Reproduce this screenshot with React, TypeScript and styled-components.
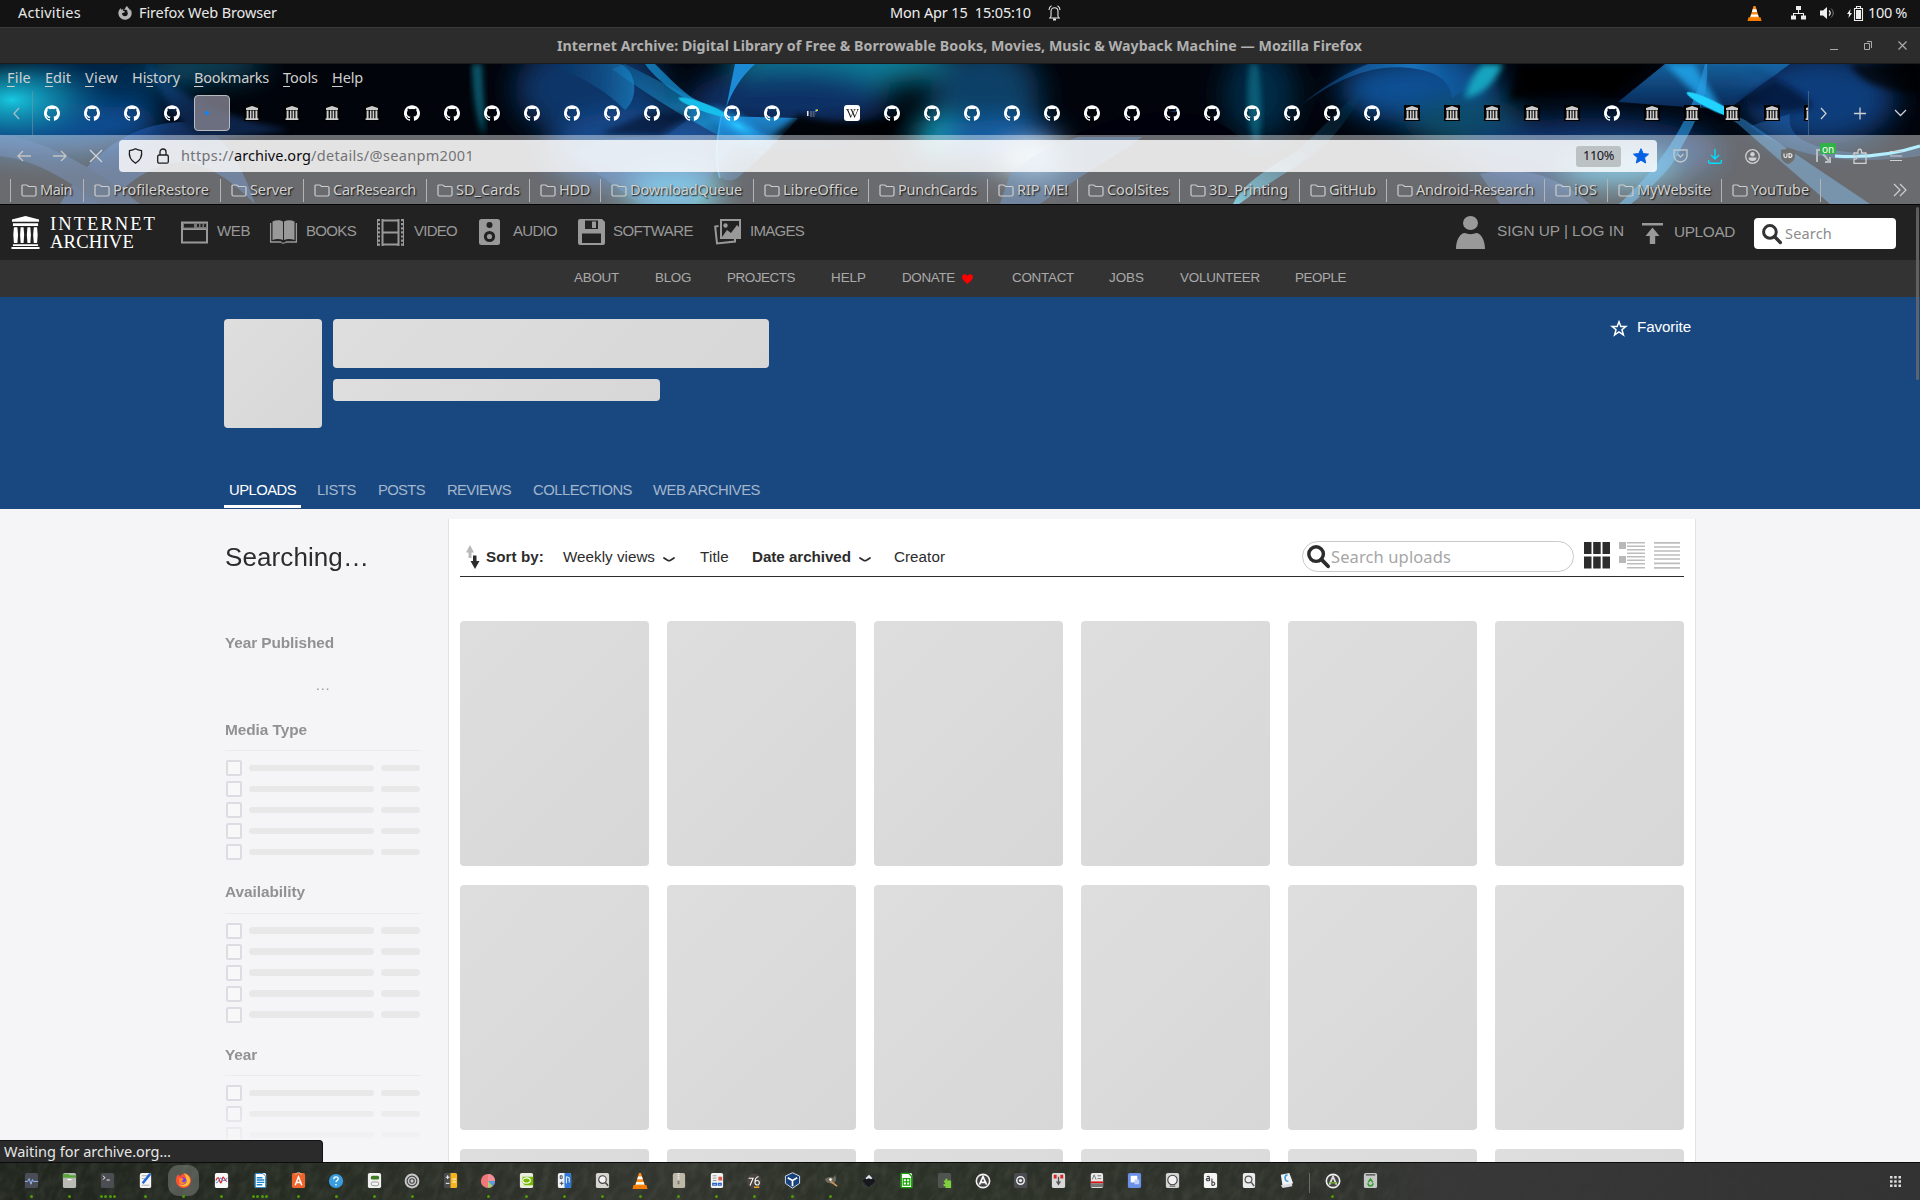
import React, { useLayoutEffect, useRef, useState } from 'react';
import styled, { createGlobalStyle } from 'styled-components';
import { SiGithub } from 'react-icons/si';
import { FaWikipediaW, FaFirefoxBrowser } from 'react-icons/fa';

const UI = '"Noto Sans", "Open Sans", sans-serif';
const SANS = '"Liberation Sans", Arial, sans-serif';
const SERIF = '"Liberation Serif", "Times New Roman", serif';

const GlobalStyle = createGlobalStyle`
  *, *::before, *::after { box-sizing: border-box; }
  body { margin: 0; background: #000; font-family: ${UI}; }
`;

/* ---------- text that keeps a given advance width ---------- */

const Label = styled.span<{ $size: number; $color: string; $font: string; $bold?: boolean; $ml: number; $shadow?: boolean }>`
  display: inline-block;
  flex: none;
  white-space: pre;
  line-height: 1.2;
  margin-left: ${(p) => p.$ml}px;
  font-family: ${(p) => p.$font};
  font-size: ${(p) => p.$size}px;
  font-weight: ${(p) => (p.$bold ? 700 : 400)};
  color: ${(p) => p.$color};
  text-shadow: ${(p) => (p.$shadow ? '1px 1px 1.5px rgba(0,0,0,0.9)' : 'none')};
  u { text-underline-offset: 3px; text-decoration-thickness: 1px; }
`;

type FitProps = {
  children: React.ReactNode;
  chars?: number;
  w: number;
  size?: number;
  color?: string;
  font?: string;
  bold?: boolean;
  ml?: number;
  shadow?: boolean;
};

function Fit({ children, chars, w, size = 14.5, color = '#fff', font = UI, bold, ml = 0, shadow }: FitProps) {
  const ref = useRef<HTMLSpanElement>(null);
  const [spacing, setSpacing] = useState(0);
  const count = chars ?? String(children).length;
  useLayoutEffect(() => {
    if (ref.current) setSpacing((w - ref.current.getBoundingClientRect().width) / count);
  }, [w, count]);
  return (
    <Label ref={ref} $size={size} $color={color} $font={font} $bold={bold} $ml={ml} $shadow={shadow} style={{ letterSpacing: spacing }}>
      {children}
    </Label>
  );
}

/* ---------- shell ---------- */

const Desktop = styled.div`
  position: relative;
  width: 1920px;
  height: 1200px;
  display: flex;
  flex-direction: column;
  overflow: hidden;
  background: #f5f5f7;
`;

const TopBar = styled.div`
  height: 27px;
  flex: none;
  display: grid;
  grid-template-columns: 890px 1fr 173px;
  align-items: center;
  padding-bottom: 1px;
  background: #131313;
`;

const Row = styled.div<{ $pl?: number; $gap?: number }>`
  display: flex;
  align-items: center;
  height: 100%;
  padding-left: ${(p) => p.$pl ?? 0}px;
  gap: ${(p) => p.$gap ?? 0}px;
`;

const Icon = styled.svg<{ $ml?: number; $mt?: number }>`
  display: block;
  flex: none;
  margin-left: ${(p) => p.$ml ?? 0}px;
  margin-top: ${(p) => p.$mt ?? 0}px;
  overflow: visible;
`;

const TitleBar = styled.div`
  height: 37px;
  flex: none;
  display: grid;
  grid-template-columns: 557px 1fr 90px;
  align-items: center;
  background: #2c2c2c;
  border-top: 1px solid #3b3b3b;
  border-bottom: 1px solid #1b1b1b;
`;

/* ---------- browser chrome ---------- */

const Chrome = styled.div`
  position: relative;
  height: 141px;
  flex: none;
  display: flex;
  flex-direction: column;
  border-bottom: 1px solid #060606;
  isolation: isolate;
`;

const Artwork = styled.svg`
  position: absolute;
  inset: 0;
  z-index: -1;
`;

const MenuRow = styled.div`
  height: 27px;
  padding: 1px 0 0 7px;
  display: flex;
  align-items: center;
`;

const TabRow = styled.div`
  height: 44px;
  display: flex;
  align-items: stretch;
`;

const Scroller = styled.div<{ $side: 'left' | 'right' }>`
  width: ${(p) => (p.$side === 'left' ? 33 : 36)}px;
  display: flex;
  align-items: center;
  justify-content: center;
  ${(p) => (p.$side === 'left' ? 'border-right: 1px solid rgba(140,150,160,0.5);' : 'border-left: 1px solid rgba(120,140,150,0.5); padding-right: 6px;')}
`;

const Tabs = styled.div`
  width: 1775px;
  display: flex;
  overflow: hidden;
`;

const Tab = styled.div`
  width: 40px;
  flex: none;
  display: flex;
  align-items: center;
  justify-content: center;
  padding: 0 2px 0 0;
  color: #fff;
`;

const ActiveTab = styled.div`
  width: 36px;
  height: 36px;
  flex: none;
  margin: 4px 3px 4px 1px;
  display: flex;
  align-items: center;
  padding-left: 10px;
  border: 1px solid #b9b9c0;
  border-radius: 4px;
  background: rgba(125, 125, 138, 0.85);
`;

const LoadingDot = styled.div`
  width: 4px;
  height: 4px;
  border-radius: 2px;
  background: #0a84ff;
`;

const Overlay = styled.div`
  flex: 1;
  background: rgba(255, 255, 255, 0.41);
  display: flex;
  flex-direction: column;
`;

const NavRow = styled.div`
  height: 41px;
  flex: none;
  display: flex;
  align-items: center;
  padding-top: 1px;
`;

const UrlBar = styled.div`
  height: 32px;
  flex: 0 0 1538px;
  margin-left: 17px;
  padding: 0 8px 0 9px;
  display: flex;
  align-items: center;
  border-radius: 4px;
  background: rgba(255, 255, 255, 0.81);
`;

const Zoom = styled.div`
  width: 45px;
  height: 25px;
  flex: none;
  margin-left: auto;
  margin-right: 12px;
  height: 21px;
  display: flex;
  align-items: center;
  justify-content: center;
  border-radius: 3px;
  background: #bcc1c4;
`;

const Spacer = styled.div<{ $w: number }>`
  width: ${(p) => p.$w}px;
  flex: none;
`;

const Bookmarks = styled.div`
  height: 28px;
  display: flex;
  align-items: center;
  padding-left: 10px;
`;

const Bookmark = styled.div<{ $w: number }>`
  width: ${(p) => p.$w}px;
  height: 23px;
  flex: none;
  display: flex;
  align-items: center;
  padding-left: 9.5px;
  gap: 3.5px;
  border-left: 1px solid #b4b4b4;
`;

const Badge = styled.div`
  position: absolute;
  left: 5px;
  top: -5px;
  width: 16px;
  height: 11px;
  display: flex;
  align-items: center;
  justify-content: center;
  border-radius: 2px;
  background: #2fb344;
`;

const BadgeHost = styled.div`
  position: relative;
  display: flex;
  width: 18px;
  margin-left: 20px;
`;

/* ---------- page ---------- */

const SiteNav = styled.div`
  height: 55px;
  flex: none;
  display: flex;
  align-items: center;
  padding-left: 11px;
  background: #222;
`;

const Wordmark = styled.div`
  width: 121px;
  margin-left: 10px;
  padding-top: 1px;
  display: flex;
  flex-direction: column;
`;

const WordLine = styled.div`
  height: 18.5px;
  display: flex;
  align-items: center;
`;

const NavSlot = styled.div<{ $w: number; $tl: number }>`
  width: ${(p) => p.$w}px;
  flex: none;
  display: grid;
  grid-template-columns: ${(p) => p.$tl}px 1fr;
  align-items: center;
  justify-items: start;
  padding-bottom: 1px;
`;

const Lift = styled.div`
  display: flex;
  padding-bottom: 2px;
`;

const SiteSearch = styled.div`
  width: 142px;
  height: 31px;
  margin-top: 2px;
  display: flex;
  align-items: center;
  padding-left: 8px;
  border-radius: 4px;
  background: #fff;
`;

const SubNav = styled.div`
  height: 37px;
  flex: none;
  display: flex;
  align-items: center;
  padding: 0 0 1px 574px;
  background: #333;
`;

const Hero = styled.div`
  height: 212px;
  flex: none;
  display: flex;
  flex-direction: column;
  padding: 22px 224px 0;
  background: #194880;
`;

const HeroTop = styled.div`
  height: 150px;
  flex: none;
  display: flex;
  gap: 11px;
`;

const Placeholder = styled.div<{ $w: number; $h: number }>`
  width: ${(p) => p.$w}px;
  height: ${(p) => p.$h}px;
  border-radius: 4px;
  background: linear-gradient(135deg, #dedede, #d7d7d7);
`;

const Stack = styled.div<{ $gap: number }>`
  display: flex;
  flex-direction: column;
  gap: ${(p) => p.$gap}px;
`;

const Favorite = styled.div`
  height: 16px;
  margin: 0 5px 0 auto;
  display: flex;
  align-items: center;
  gap: 9px;
`;

const HeroTabs = styled.div`
  height: 40px;
  display: flex;
  gap: 11px;
`;

const HeroTab = styled.div<{ $w: number; $active?: boolean }>`
  width: ${(p) => p.$w}px;
  height: 39px;
  padding: 9px 0 0 5px;
  border-bottom: 3px solid ${(p) => (p.$active ? '#fff' : 'transparent')};
`;

const Body = styled.div`
  height: 653px;
  flex: none;
  display: flex;
  padding: 10px 0 0 225px;
  overflow: hidden;
  background: #f5f5f7;
`;

const Sidebar = styled.div`
  width: 223px;
  height: 643px;
  flex: none;
  padding-top: 23px;
  overflow: hidden;
  display: flex;
  flex-direction: column;
  mask-image: linear-gradient(#000 582px, transparent 628px);
`;

const Slot = styled.div<{ $h: number; $pl?: number }>`
  height: ${(p) => p.$h}px;
  padding-left: ${(p) => p.$pl ?? 0}px;
  flex: none;
`;

const Facet = styled.div`
  width: 196px;
  height: 162.6px;
  flex: none;
  display: flex;
  flex-direction: column;
`;

const FacetHead = styled.div`
  height: 34px;
  flex: none;
  padding-top: 0.7px;
  margin-bottom: 6.5px;
  border-bottom: 1px solid #ebebed;
`;

const FacetRow = styled.div`
  height: 21px;
  flex: none;
  display: flex;
  align-items: center;
  padding-left: 1px;
`;

const Check = styled.div`
  width: 16px;
  height: 16px;
  flex: none;
  margin-right: 7px;
  border: 2px solid #dcdce2;
  border-radius: 2px;
  background: #f8f8f9;
`;

const Bar = styled.div<{ $w: number }>`
  width: ${(p) => p.$w}px;
  height: 6.6px;
  flex: none;
  margin-right: 7px;
  border-radius: 4px;
  background: #e8e8e8;
`;

const Panel = styled.div`
  width: 1248px;
  height: 643px;
  padding: 19px 11px 0 11px;
  border: 1px solid #e3e3e5;
  border-width: 0 1px;
  background: #fff;
`;

const SortBar = styled.div`
  height: 39px;
  display: flex;
  align-items: center;
  padding: 1px 4px 1px 5px;
  border-bottom: 1px solid #2c2c2c;
`;

const UploadSearch = styled.div`
  width: 272px;
  height: 31px;
  margin: -1px 0 0 auto;
  display: flex;
  align-items: center;
  padding-left: 4px;
  border: 1px solid #c9c9c9;
  border-radius: 16px;
`;

const Tiles = styled.div`
  margin-top: 44px;
  display: grid;
  grid-template-columns: repeat(6, 1fr);
  gap: 19px 18.5px;
`;

const Tile = styled.div`
  height: 245px;
  border-radius: 4px;
  background: linear-gradient(135deg, #dedede, #d7d7d7);
`;

const Status = styled.div`
  position: absolute;
  left: 0;
  top: 1140px;
  width: 323px;
  height: 22px;
  display: flex;
  padding: 1.500px 0 0 4px;
  border: 1px solid #121212;
  border-width: 1px 1px 0 0;
  border-radius: 0 4px 0 0;
  background: #2b2b2b;
`;

const ScrollThumb = styled.div`
  position: absolute;
  left: 1916px;
  top: 207px;
  width: 3px;
  height: 173px;
  border-radius: 2px;
  background: #686868;
  opacity: 0.85;
`;

const Dock = styled.div`
  position: relative;
  height: 38px;
  flex: none;
  display: flex;
  padding-left: 12.8px;
  border-top: 1px solid #0b0b0b;
  background: #2b3026;
  isolation: isolate;
`;

const DockItem = styled.div`
  width: 38.04px;
  flex: none;
  display: flex;
  flex-direction: column;
  align-items: center;
  padding-top: 2px;
`;

const DockTile = styled.div<{ $on?: boolean }>`
  width: 31px;
  height: 31px;
  flex: none;
  display: flex;
  align-items: center;
  justify-content: center;
  border-radius: 11px;
  background: ${(p) => (p.$on ? 'rgba(150,155,148,0.42)' : 'transparent')};
`;

const Dots = styled.div`
  margin-top: -2px;
  height: 4px;
  display: flex;
  align-items: center;
  gap: 1.4px;
`;

const Dot = styled.i`
  width: 3px;
  height: 3px;
  border-radius: 1.5px;
  background: #4e9a06;
`;

const DockRule = styled.div`
  width: 1px;
  height: 20px;
  margin: 10px 4px 0 3px;
  background: #6b6b6b;
`;

/* ---------- drawings ---------- */

const Temple = ({ w, h, color }: { w: number; h: number; color: string }) => (
  <Icon width={w} height={h} viewBox="0 0 30 34" preserveAspectRatio="none" fill={color}>
    <path d="M15 0 29 3.5V6H1V3.5ZM2 7.5h26v2.8H2ZM2 29h26v2H2ZM.5 32h29v2H.5Z" />
    <path d="M3 11.5h3.6l.7 8-.7 8.3H3l-.6-8.3ZM10 11.5h3l.6 8-.6 8.3h-3l-.6-8.3ZM17 11.5h3l.6 8-.6 8.3h-3l-.6-8.3ZM23.6 11.5H27l.6 8-.6 8.3h-3.4l-.7-8.3Z" />
  </Icon>
);

const ArchiveFavicon = () => (
  <Icon width="16" height="16" viewBox="0 0 16 16">
    <path fill="#000" d="M0 0h16v16H0z" />
    <path fill="#ccc" d="M8 1 14 3v2H2V3ZM2.6 5.4h2v7.8h-2zM5.9 5.4h1.6v7.8H5.9zM8.6 5.4h1.6v7.8H8.6zM11.4 5.4h2v7.8h-2zM1.6 13.2h12.8V15H1.6z" />
  </Icon>
);

const Wiki = styled.div`
  width: 16px;
  height: 16px;
  display: flex;
  align-items: center;
  justify-content: center;
  border-radius: 3px;
  background: #fff;
  color: #111;
`;

const Folder = () => (
  <Icon width="16" height="13" viewBox="0 0 16 13" fill="none" stroke="#cdcdcd" strokeWidth="1.2">
    <path d="M1 2a1 1 0 0 1 1-1h3.6a1 1 0 0 1 .7.3l1.2 1.2h6.3a1.2 1.2 0 0 1 1.2 1.2v6.8a1.5 1.5 0 0 1-1.5 1.5h-11A1.5 1.5 0 0 1 1 10.500Z" />
  </Icon>
);

const Magnifier = ({ size, color = '#333' }: { size: number; color?: string }) => (
  <Icon width={size} height={size} viewBox="0 0 24 24" fill="none" stroke={color}>
    <circle cx="9.500" cy="9.500" r="7.600" strokeWidth="3.600" />
    <path d="m15 15 7 7.200" strokeWidth="4" strokeLinecap="round" />
  </Icon>
);

const Chevron = () => (
  <Icon width="12" height="5" viewBox="0 0 12 5" $ml={8} $mt={5} fill="none" stroke="#2c2c2c" strokeWidth="1.8" strokeLinecap="round">
    <path d="M1 1 4.500 3.200Q6 4 7.500 3.200L11 1" />
  </Icon>
);

const ThemeArt = () => (
  <Artwork width="1920" height="140" viewBox="0 0 1920 140">
    <defs>
      <filter id="s3" x="-20%" y="-40%" width="140%" height="180%"><feGaussianBlur stdDeviation="3" /></filter>
      <filter id="s1" x="-20%" y="-20%" width="140%" height="140%"><feGaussianBlur stdDeviation=".7" /></filter>
      <filter id="s12" x="-60%" y="-100%" width="220%" height="300%"><feGaussianBlur stdDeviation="14" /></filter>
      <linearGradient id="down" x1="0" y1="0" x2="0" y2="1"><stop offset="0" stopColor="#1a70b4" /><stop offset="1" stopColor="#0a2f64" /></linearGradient>
      <linearGradient id="beam" x1="0" y1="0" x2="1" y2="1"><stop offset="0" stopColor="#1488cc" stopOpacity=".5" /><stop offset=".6" stopColor="#20b8f8" /><stop offset="1" stopColor="#1a6fd0" stopOpacity=".1" /></linearGradient>
      <linearGradient id="tail" x1="0" y1="0" x2="0" y2="1"><stop offset="0" stopColor="#22a8f4" stopOpacity=".85" /><stop offset="1" stopColor="#2a78cc" stopOpacity=".3" /></linearGradient>
      <linearGradient id="lobe" x1="0" x2="1"><stop offset="0" stopColor="#0c3a70" stopOpacity="0" /><stop offset="1" stopColor="#1a7ab8" /></linearGradient>
      <linearGradient id="lance" x1="1" y1="0" x2="0" y2="1"><stop offset="0" stopColor="#0e5a74" stopOpacity=".1" /><stop offset=".5" stopColor="#1a6f9c" stopOpacity=".45" /><stop offset="1" stopColor="#3ed0f0" /></linearGradient>
      <linearGradient id="arc"><stop offset="0" stopColor="#12509a" stopOpacity=".5" /><stop offset=".6" stopColor="#1b80cc" /><stop offset="1" stopColor="#0c4a8c" stopOpacity=".4" /></linearGradient>
      <radialGradient id="hot"><stop offset="0" stopColor="#28c4ff" /><stop offset="1" stopColor="#1678d8" stopOpacity="0" /></radialGradient>
      <radialGradient id="teal"><stop offset="0" stopColor="#18c8e0" /><stop offset=".5" stopColor="#0f84a4" stopOpacity=".7" /><stop offset="1" stopColor="#0a4a80" stopOpacity="0" /></radialGradient>
    </defs>
    <path fill="#01040b" d="M0 0h1920v140H0z" />
    <g filter="url(#s12)">
      <ellipse cx="50" cy="60" rx="110" ry="30" fill="#0c4f96" />
      <ellipse cx="110" cy="15" rx="90" ry="28" fill="#062c50" />
      <ellipse cx="205" cy="0" rx="60" ry="16" fill="#0a4a62" />
      <ellipse cx="590" cy="25" rx="75" ry="50" fill="#0b3568" />
      <ellipse cx="640" cy="85" rx="90" ry="40" fill="#15488c" />
      <ellipse cx="840" cy="-4" rx="110" ry="26" fill="#11809c" />
      <ellipse cx="790" cy="35" rx="100" ry="32" fill="#0c3068" />
      <ellipse cx="985" cy="30" rx="55" ry="50" fill="#074066" />
      <ellipse cx="938" cy="74" rx="24" ry="18" fill="#18b0d0" />
      <ellipse cx="1000" cy="78" rx="60" ry="22" fill="#1664ac" />
      <ellipse cx="1035" cy="100" rx="30" ry="12" fill="#bff0ff" />
      <ellipse cx="1260" cy="30" rx="36" ry="46" fill="#062a46" />
      <ellipse cx="1420" cy="25" rx="80" ry="34" fill="#0e4f94" />
      <ellipse cx="1465" cy="58" rx="60" ry="26" fill="#0b4c68" />
      <ellipse cx="1590" cy="88" rx="130" ry="34" fill="#0c3570" />
      <ellipse cx="1620" cy="108" rx="54" ry="12" fill="#3cb4e0" />
      <ellipse cx="1820" cy="35" rx="75" ry="46" fill="#0d3c7c" />
      <ellipse cx="675" cy="130" rx="46" ry="18" fill="#34ccee" />
    </g>
    <ellipse cx="12" cy="36" rx="105" ry="50" fill="url(#teal)" />
    <g opacity=".42">
      <path filter="url(#s1)" fill="#2a6ad0" d="M60 140C90 90 130 58 185 58c30 0 55 35 70 82-25-25-45-38-70-42-25 0-55 15-75 42Z" />
      <path filter="url(#s1)" fill="#2a5ca8" d="M0 70c40 5 90 30 140 70h-40C60 110 30 95 0 92Z" />
      <path filter="url(#s3)" fill="#1b4f9c" d="M150 0c30 34 70 52 140 66L200 78C180 60 165 34 145 0Z" />
    </g>
    <path filter="url(#s3)" d="M472 0c1 30 4 55 12 72 2-25-2-50-2-72Z" fill="#0e6f88" opacity=".8" />
    <path filter="url(#s1)" d="M545 0c45 14 68 34 80 46 14-12 12-38-4-46Z" fill="url(#lobe)" opacity=".8" />
    <path filter="url(#s1)" d="M625 0 705 40 780 78 762 92C720 75 660 40 612 5Z" fill="url(#beam)" opacity=".6" />
    <path filter="url(#s1)" d="M655 0c18 18 32 32 52 44l-4 0C678 32 655 15 645 0Z" fill="#1686c6" opacity=".8" />
    <path d="M735 0h20C740 14 732 28 726 44Z" fill="#1a8ad4" filter="url(#s1)" />
    <path d="M690 54 668 70 600 76 570 90 640 140h50l45-60Z" fill="#2a66b8" opacity=".35" filter="url(#s1)" />
    <path d="M692 50 660 72 600 70 650 48Z" fill="#00040c" opacity=".5" filter="url(#s3)" />
    <path d="M700 42 718 52 798 54C780 75 758 96 742 110c-8 10-22 8-24-4-3-18-1-36 5-54Z" fill="url(#tail)" filter="url(#s1)" />
    <ellipse cx="738" cy="62" rx="42" ry="15" transform="rotate(30 738 62)" fill="url(#hot)" />
    <ellipse cx="703" cy="43" rx="26" ry="4" transform="rotate(20 703 43)" fill="#19c6f0" opacity=".9" filter="url(#s1)" />
    <path d="M722 50c-7 30-7 50-2 64" stroke="#38b6ff" strokeWidth="1.500" fill="none" opacity=".7" />
    <path d="M800 50c20 8 60 14 105 0l-15 24H770Z" fill="#000" opacity=".85" filter="url(#s3)" />
    <path d="M1010 110c40-35 80-40 170-65-50 40-90 60-140 95h-40Z" fill="#1c5ca8" opacity=".5" filter="url(#s1)" />
    <path d="M1085 66c50-20 110-30 155 7H1070Z" fill="#03060f" filter="url(#s1)" />
    <path d="M1250 0c-4 30-3 60 6 82 8-18 6-50 2-82Z" fill="#0d6a84" opacity=".8" filter="url(#s3)" />
    <path d="M1300 42c40-30 76-42 110-38 26 3 40 12 42 30 14-8 30-20 34-34h-118c-25 10-50 26-68 42Z" fill="url(#arc)" opacity=".8" filter="url(#s1)" />
    <path d="M1483 0h20c-8 18-18 30-38 34 2-12 8-24 18-34Z" fill="#18a4c0" filter="url(#s3)" />
    <path d="M1233 140c10-22 40-38 62-52 22-16 40-42 72-66-20 36-35 56-62 74-20 14-44 28-66 44Z" fill="url(#lance)" opacity=".8" filter="url(#s1)" />
    <path d="M1520 0h130l-40 34c-30-12-50-6-100 2Z" fill="#000" opacity=".85" filter="url(#s3)" />
    <path d="M1665 0 1618 38 1700 44 1730 44 1790 0Z" fill="url(#down)" opacity=".85" filter="url(#s1)" />
    <path d="M1665 0 1702 36 1722 46 1694 0Z" fill="#22b0f8" opacity=".75" filter="url(#s3)" />
    <path d="M1707 0c2 24-6 50-26 84-8 20-30 40-50 56h-12c44-40 72-84 86-140Z" fill="#2a9ee6" opacity=".6" filter="url(#s1)" />
    <path d="M1700 34 1745 56 1870 140h-40L1738 60Z" fill="#368ed8" opacity=".5" filter="url(#s1)" />
    <ellipse cx="1712" cy="41" rx="28" ry="4.500" transform="rotate(26 1712 41)" fill="#20d2ff" filter="url(#s1)" />
    <path d="M1745 4c40 13 60 26 68 38-15 8-36 8-56 0l-18-5 34-22Z" fill="#04102a" opacity=".65" filter="url(#s3)" />
    <path d="M1790 50c-4 25 20 36 80 40l50-6v8c-70 10-130 2-170-30Z" fill="#2d78c8" opacity=".35" filter="url(#s1)" />
    <path d="M1835 92c30 2 60-2 85-10" stroke="#7fe4ff" strokeWidth="3" fill="none" filter="url(#s1)" />
    <path d="M1850 0h70v30c-35-4-60-10-70-30Z" fill="#000" opacity=".7" filter="url(#s3)" />
    <path d="M1480 110c50-10 80 5 110 30h-90Z" fill="#3f7ad0" opacity=".35" filter="url(#s1)" />
  </Artwork>
);

const Vlc = ({ s }: { s: number }) => (
  <Icon width={s} height={s} viewBox="0 0 16 16">
    <path d="M1.500 12h13l1 4H.5Z" fill="#f57c00" />
    <path d="M7 0h2l4 13H3Z" fill="#ff8c1a" />
    <path d="M6.100 3.500h3.800l.9 2.800H5.200ZM4.300 9h7.400l.8 2.500h-9Z" fill="#fff" />
  </Icon>
);

const BoxArt = ({ bg, children, x = 2, w = 14 }: { bg: string; children?: React.ReactNode; x?: number; w?: number }) => (
  <Icon width="17" height="17" viewBox="0 0 18 18">
    <rect x={x} y="1" width={w} height="16" rx="2" fill={bg} />
    {children}
  </Icon>
);

const dock: { art: React.ReactNode; dots: number; on?: boolean }[] = [
  { dots: 1, art: <BoxArt bg="#4a4d55"><path d="M2 10h3l1.500-3 2 6 1.500-5 1 2h5" stroke="#9ab8ff" fill="none" /></BoxArt> },
  { dots: 1, art: <BoxArt bg="#b9b9b5"><path d="M2 2h6l1 1.500h7V6H2Z" fill="#57a639" /><path d="M7 8h4" stroke="#fff" strokeWidth="1.400" /></BoxArt> },
  { dots: 4, art: <BoxArt bg="#4a4d52"><path d="m4 4 2.500 2L4 8M8 8.500h3.500" stroke="#eee" fill="none" /></BoxArt> },
  { dots: 1, art: <BoxArt bg="#f4f4f4" x={3} w={12}><path d="M5 4h7M5 14h8M5 7h4" stroke="#aaa" /><path d="m6 12 8-10" stroke="#2468d8" strokeWidth="2.600" /></BoxArt> },
  { dots: 1, on: true, art: (
    <Icon width="17" height="17" viewBox="0 0 18 18">
      <path d="M9 1.500c5 0 8 3.500 8 7.500a8 8 0 0 1-16 0c0-3 1-5 2.500-6.500L5 4.500c1-1 2.500-2 4-3Z" fill="#ff4f3a" />
      <path d="M9.500 1c4 2 7 4 6.500 9a7 7 0 0 1-12 3c8 2 10-4 5.500-12Z" fill="#ffbd2e" />
      <circle cx="8.500" cy="9.500" r="3.700" fill="#7a3fe0" /><path d="M4 7c2-1 4-1 5 1l-2 1.500c1 2 3 2 5 0-.5 3-5 5-7.500 2Z" fill="#ff8a1e" />
    </Icon>) },
  { dots: 1, art: <BoxArt bg="#fafafa"><path d="M3 9c2-4 3-4 4 0s2 3 3-2 3 4 5 3" stroke="#d42a2a" fill="none" strokeWidth="1.300" /><path d="M3 11c3 2 4-7 6-4s4 3 6-1" stroke="#3a6fd0" fill="none" /></BoxArt> },
  { dots: 4, art: <BoxArt bg="#fff" x={3} w={12}><path d="M3.500 1.500h8l3 3v12h-11Z" fill="none" stroke="#1a78bb" /><path d="M5 6h6M5 8.500h8M5 11h8M5 13.500h6" stroke="#1a86cf" strokeWidth="1.500" /></BoxArt> },
  { dots: 1, art: <BoxArt bg="#f0642c"><path d="M6 3c0-3 6-3 6 0" stroke="#d8c4a8" fill="none" /><path d="m5.500 14 3.500-9 3.500 9M6.500 11h5" stroke="#fff" fill="none" strokeWidth="1.600" /></BoxArt> },
  { dots: 1, art: <Icon width="16" height="16" viewBox="0 0 18 18"><circle cx="9" cy="9" r="8" fill="#3a9de0" /><path d="M6.500 7c0-3.500 5-3.500 5-.5 0 2-2.500 2-2.500 4M9 12.500v1.600" stroke="#fff" fill="none" strokeWidth="1.500" /></Icon> },
  { dots: 1, art: <BoxArt bg="#f1f1f1"><rect x="5" y="4" width="9" height="4" rx="2" fill="#3d7d20" /><rect x="5.500" y="10.500" width="8" height="4" rx="2" fill="none" stroke="#999" /></BoxArt> },
  { dots: 1, art: <Icon width="16" height="16" viewBox="0 0 18 18"><circle cx="9" cy="9" r="8.300" fill="#c9c9c9" /><circle cx="9" cy="9" r="5.500" fill="none" stroke="#444" strokeWidth="1.300" /><circle cx="9" cy="9" r="2.500" fill="none" stroke="#444" strokeWidth="1.300" /></Icon> },
  { dots: 0, art: <BoxArt bg="#4a4c50"><path d="M9 1h5a2 2 0 0 1 2 2v12a2 2 0 0 1-2 2H9Z" fill="#f6b51e" /><path d="M4 5.500h4M6 3.500v4M4 12h4M11 7.500h4M11 10.500h4" stroke="#fff" /></BoxArt> },
  { dots: 1, art: <Icon width="16" height="16" viewBox="0 0 18 18"><circle cx="9" cy="9" r="8" fill="#f07878" /><path d="M9 9V1a8 8 0 0 1 8 8Z" fill="#f09098" /><path d="M9 9h8a8 8 0 0 1-3 6Z" fill="#5a9be0" /><path d="m9 9 5 6a8 8 0 0 1-5 2Z" fill="#a9d06a" /></Icon> },
  { dots: 1, art: <BoxArt bg="#e8eedd"><path d="M5 5h11v9H7l-3-4Z" fill="#76b900" /><ellipse cx="9" cy="9" rx="4" ry="2.800" fill="none" stroke="#fff" strokeWidth="1.200" /></BoxArt> },
  { dots: 1, art: <BoxArt bg="#eef1f5"><path d="M9 1h5a2 2 0 0 1 2 2v12a2 2 0 0 1-2 2H9Z" fill="#2f78d8" /><path d="M4 12h4M6 10v4M4.500 4h2v3h-2Z" stroke="#445" fill="none" /><path d="M11 12V5l3 1v5" stroke="#fff" fill="none" /></BoxArt> },
  { dots: 1, art: <BoxArt bg="#d9d6d0"><circle cx="9" cy="8" r="4" fill="#f4f4f4" stroke="#444" strokeWidth="1.200" /><path d="m12 11 3 3.500" stroke="#444" strokeWidth="1.600" /></BoxArt> },
  { dots: 1, art: <Vlc s={16} /> },
  { dots: 1, art: <BoxArt bg="#bdb8a8" x={3} w={13}><path d="M9 1v9" stroke="#f3f3f0" strokeWidth="2" strokeDasharray="1 1" /><path d="M8 9h2v4H8Z" fill="#777" /></BoxArt> },
  { dots: 1, art: <BoxArt bg="#f2f2f2" x={3} w={13}><path d="M5 4h4M5 6.500h4M5 9h4" stroke="#999" /><path d="M11 5h4v4h-4Z" fill="#d85a4a" /><path d="M5 12h4v2H5Zm6 0h3v2h-3Z" fill="none" stroke="#2a65c8" strokeWidth="1.300" /></BoxArt> },
  { dots: 1, art: <Icon width="16" height="16" viewBox="0 0 18 18"><circle cx="9" cy="9" r="8.400" fill="#4a4440" /><path d="M3 6h5L4.500 14M14 4c-3 1-4 4-4 6.500 0 4 5 4 5 .5s-4-3-5-.5" stroke="#fff" fill="none" strokeWidth="1.200" /><path d="M9 16h6" stroke="#f5a623" strokeWidth="1.600" /></Icon> },
  { dots: 1, art: <Icon width="17" height="17" viewBox="0 0 18 18"><path d="m9 .8 7.500 3.500V12L9 17.200 1.500 12V4.300Z" fill="#17427c" stroke="#d6e2f0" /><path d="m4 6 5 3 5-3M9 9v6" stroke="#fff" fill="none" strokeWidth="1.800" /></Icon> },
  { dots: 1, art: <Icon width="17" height="17" viewBox="0 0 18 18"><path d="M3 8c2-3 7-3 9-2l2-3 1 4c0 4-3 6-6 5-3 0-5-1-6-4Z" fill="#6d6a5e" /><circle cx="9" cy="8" r="1.400" fill="#fff" /><path d="m9 10 7 5" stroke="#d89a58" strokeWidth="1.500" /></Icon> },
  { dots: 0, art: <Icon width="16" height="16" viewBox="0 0 18 18"><path d="m9 1 8 8-3 3 1 1-4 1-2 3-3-3-3-1 1-1-3-3Z" fill="#17171c" stroke="#4a4c58" strokeWidth=".6" /><path d="m9 2 4 4-2 1-2-1-3 1-1-1Z" fill="#dfe6f0" /></Icon> },
  { dots: 0, art: <BoxArt bg="#fff" x={3} w={12}><path d="M3.500 1.500h8l3 3v12h-11Z" fill="#fff" stroke="#18a303" strokeWidth="1.400" /><path d="M5.500 7h7v7h-7ZM5.500 10.500h7M9 7v7" stroke="#18a303" strokeWidth="1.300" fill="none" /></BoxArt> },
  { dots: 0, art: <BoxArt bg="#505450"><path d="M8 9h2c-1-3 3-3 2 0h4v8h-6v-2c-3 1-3-3 0-2Z" fill="#7fd03c" /></BoxArt> },
  { dots: 0, art: <Icon width="16" height="16" viewBox="0 0 18 18"><circle cx="9" cy="9" r="7.500" fill="#444" stroke="#f0f0f0" strokeWidth="1.800" /><path d="m5 13 4-9 4 9M6 10.500h6" stroke="#fff" fill="none" strokeWidth="1.800" /></Icon> },
  { dots: 0, art: <BoxArt bg="#4a4c52"><circle cx="9" cy="9" r="4" fill="none" stroke="#eee" strokeWidth="1.500" /><circle cx="9" cy="9" r="1.700" fill="#eee" /></BoxArt> },
  { dots: 0, art: <BoxArt bg="#d8d8d8"><path d="M4 3h3v4H4ZM11 3h3v4h-3Z" fill="#e02020" /><path d="M9 5v7m-2-2 2 3 2-3" stroke="#555" fill="none" strokeWidth="1.400" /></BoxArt> },
  { dots: 0, art: <BoxArt bg="#e9e9e9" x={3} w={13}><path d="M3 10h13v2H3Z" fill="#e01010" /><path d="M3 12h13v4H3Z" fill="#777" /><path d="m4.500 8 2-5 2 5M10 4h4M10 7h4" stroke="#777" fill="none" /></BoxArt> },
  { dots: 0, art: <BoxArt bg="#6a90e8"><path d="M5 4h7v7H5Z" fill="#fff" /><path d="M9 8h5v5H9Z" fill="#bcd0fa" /></BoxArt> },
  { dots: 0, art: <BoxArt bg="#d5d5d5"><circle cx="9" cy="8.500" r="5" fill="#f2f2f2" stroke="#444" strokeWidth="1.200" /><path d="M6 15h6" stroke="#555" /></BoxArt> },
  { dots: 0, art: <BoxArt bg="#f6f6f6"><path d="M5 5c3-1 3 0 3 4-3 1-4-1-3-2h3M10.500 7v7c4 1 4-4 0-3.500" stroke="#444" fill="none" strokeWidth="1.200" /></BoxArt> },
  { dots: 0, art: <BoxArt bg="#ececec" x={3} w={13}><circle cx="9" cy="8" r="3.600" fill="none" stroke="#555" strokeWidth="1.300" /><path d="m12 11 3 4" stroke="#555" strokeWidth="1.600" /></BoxArt> },
  { dots: 0, art: <Icon width="17" height="17" viewBox="0 0 18 18"><path d="m3 3 9-2 4 11-11 4Z" fill="#f1f4f6" /><path d="M10 3c-4 1-3 7 1 7" stroke="#3a9ad9" fill="none" strokeWidth="1.600" /><path d="m3 14 12-2v3L5 17Z" fill="#d9dde0" /></Icon> },
];

const lastDock: { art: React.ReactNode; dots: number }[] = [
  { dots: 1, art: <Icon width="16" height="16" viewBox="0 0 18 18"><circle cx="9" cy="9" r="7.500" fill="#444" stroke="#f0f0f0" strokeWidth="1.800" /><path d="m5 13 4-9 4 9" stroke="#ddd" fill="none" strokeWidth="2" /><path d="M5 11h8" stroke="#6fae2e" strokeWidth="1.600" /></Icon> },
  { dots: 0, art: <BoxArt bg="#c6c8c6"><path d="M4 3h10" stroke="#666" strokeWidth="1.800" /><path d="m6.500 11 2.500-3.500L11.500 11M6 12l1.500 2.500h3L12 12" stroke="#2f9a2a" fill="none" strokeWidth="1.700" /></BoxArt> },
];

const Special = () => (
  <Icon width="16" height="16" viewBox="0 0 16 16">
    <path d="M3 6h1.500v5H3Z" fill="#e8e8e8" /><path d="M6 7h5M6 9h5.500M6 11h5" stroke="#8a8a8a" fill="none" strokeDasharray="2 .6" />
    <path d="M11 4.500h2V7h-2Z" fill="#3b7ed0" /><path d="M12 4.500h2V6h-2Z" fill="#f3d040" />
  </Icon>
);

const tabKinds = ('gggg*aaaagggggggggg?wggggggggggggg' + 'aaaaagaaaaa').split('');

const bookmarks: [string, number, number][] = [
  ['Main', 73, 32], ['ProfileRestore', 137, 96], ['Server', 83, 43], ['CarResearch', 123, 83], ['SD_Cards', 103, 64],
  ['HDD', 71, 31], ['DownloadQueue', 153, 112], ['LibreOffice', 115, 75], ['PunchCards', 119, 79], ['RIP ME!', 90, 51],
  ['CoolSites', 102, 62], ['3D_Printing', 120, 79], ['GitHub', 87, 47], ['Android-Research', 158, 118], ['iOS', 63, 23],
  ['MyWebsite', 114, 74], ['YouTube', 99, 58],
];

const menus: [string, string, string, number, number][] = [
  ['', 'F', 'ile', 24, 0], ['', 'E', 'dit', 26, 14], ['', 'V', 'iew', 33, 14], ['Hi', 's', 'tory', 48, 14],
  ['', 'B', 'ookmarks', 75, 14], ['', 'T', 'ools', 35, 14], ['', 'H', 'elp', 31, 14],
];

const GRAY = '#999';

const mediaNav: [string, number, number, number, React.ReactNode][] = [
  ['WEB', 89, 36, 33, <Icon key="w" width="27" height="23" viewBox="0 0 27 23" fill="none" stroke={GRAY} strokeWidth="2"><path d="M1 1.500h25v20H1ZM1 8h25" /><path d="M2 2h24v5.500H2Z" fill="#777" stroke="none" /><path d="M3 3h10v3.500H3Z" fill="#222" stroke="none" /><path d="M16 3h2v3h-2ZM19.500 3h2v3h-2ZM23 3h2v3h-2Z" fill="#222" stroke="none" /></Icon>],
  ['BOOKS', 107, 36, 50, <Icon key="b" width="27" height="24" viewBox="0 0 27 24" fill={GRAY}><path d="M2.500 1.500C6-.3 10-.3 13 1.500V20C10 18.500 6 18.500 2.500 20ZM14 1.500C17-.3 21-.3 24.500 1.500V20C21 18.500 17 18.500 14 20Z" /><path d="M.6 3v19h10c1 1.500 4.500 1.500 5.500 0h10.300V3" fill="none" stroke={GRAY} strokeWidth="1.300" /></Icon>],
  ['VIDEO', 102, 37, 43, <Icon key="v" width="27" height="27" viewBox="0 0 27 27" fill="none" stroke={GRAY}><path d="M5.500 0v27M21.500 0v27" strokeWidth="2" /><path d="M5 1.500h17M5 13.500h17M5 25.500h17" strokeWidth="2.200" /><path d="M1.500 0v27M25.500 0v27" strokeWidth="3" strokeDasharray="2.200 1.900" /><path d="M.5 0v27M26.500 0v27" /></Icon>],
  ['AUDIO', 99, 34, 44, <Icon key="a" width="21" height="26" viewBox="0 0 21 26"><rect width="21" height="26" rx="2.500" fill={GRAY} /><circle cx="10.500" cy="6" r="3" fill="#222" /><circle cx="10.500" cy="17.500" r="5.600" fill="#222" /><circle cx="10.500" cy="17.500" r="2.600" fill={GRAY} /></Icon>],
  ['SOFTWARE', 136, 35, 80, <Icon key="s" width="27" height="26" viewBox="0 0 27 26"><path d="M2 0h22l3 3v21a2 2 0 0 1-2 2H2a2 2 0 0 1-2-2V2a2 2 0 0 1 2-2Z" fill={GRAY} /><path d="M7 1.500h13V10H7ZM4 14.500h19V24H4Z" fill="#222" /><path d="M14 2.500h4V9h-4Z" fill={GRAY} /></Icon>],
  ['IMAGES', 742, 36, 54, <Icon key="i" width="27" height="26" viewBox="0 0 27 26"><path d="M7 1h19v18H7Z" fill="none" stroke={GRAY} strokeWidth="2" /><path d="m8 18 5-7 4 3 6-8 3 3v10H8Z" fill={GRAY} /><circle cx="11.500" cy="6.500" r="2.200" fill={GRAY} /><path d="M4.500 7 1.200 7.500l1.800 17 18-2V20" fill="none" stroke={GRAY} strokeWidth="2" /></Icon>],
];

const subNav: [string, number, number][] = [
  ['ABOUT', 45, 0], ['BLOG', 36, 36], ['PROJECTS', 68, 36], ['HELP', 35, 36], ['DONATE', 53, 36],
  ['CONTACT', 62, 39], ['JOBS', 35, 35], ['VOLUNTEER', 80, 36], ['PEOPLE', 51, 35],
];

const heroTabs: [string, number, number][] = [
  ['UPLOADS', 77, 67], ['LISTS', 50, 39], ['POSTS', 58, 47], ['REVIEWS', 75, 64], ['COLLECTIONS', 109, 99], ['WEB ARCHIVES', 118, 107],
];

const ink = '#2c2c2c';
const chromeGray = '#d0d0d0';

function Dotted({ n }: { n: number }) {
  return <Dots>{Array.from({ length: n }, (_, i) => <Dot key={i} />)}</Dots>;
}

export default function App() {
  return (
    <Desktop>
      <GlobalStyle />
      <TopBar>
        <Row $pl={18}>
          <Fit w={63} color="#e8e8e8">Activities</Fit>
          <Row $pl={37}><FaFirefoxBrowser size={14} color="#b4b4b4" /></Row>
          <Fit w={138} ml={7} color="#e8e8e8">Firefox Web Browser</Fit>
        </Row>
        <Row>
          <Fit w={141} color="#eee">Mon Apr 15  15:05:10</Fit>
          <Icon $ml={17} width="13" height="16" viewBox="0 0 13 16" fill="none" stroke="#e6e6e6" strokeWidth="1.100"><path d="M1 13h11M2.500 12.500C3.500 11 3 9 3 6.500c0-5 7-5 7 0 0 2.500-.5 4.500.5 6M1 5c0-2 1-3.500 2.500-4.300M12 5c0-2-1-3.500-2.500-4.300" /><path d="M5 14.500h3" strokeWidth="2" /></Icon>
        </Row>
        <Row>
          <Vlc s={15} />
          <Icon $ml={29} width="15" height="14" viewBox="0 0 15 14" fill="#eee"><path d="M5 0h5v4H5ZM0 9.500h5v4H0ZM10 9.500h5v4h-5ZM7 4h1v3h5v3h-1V8H3v2H2V7h5Z" /></Icon>
          <Icon $ml={14} width="15" height="14" viewBox="0 0 15 14"><path d="M0 4.500h3L7 1v12L3 9.500H0Z" fill="#eee" /><path d="M9 4.500c1.500 1.500 1.500 3.500 0 5" stroke="#eee" fill="none" strokeWidth="1.200" /><path d="M11 2.500c3 3 3 6 0 9" stroke="#777" fill="none" /></Icon>
          <Icon $ml={12} width="16" height="15" viewBox="0 0 16 15"><path d="M3.500 3 0 8h2l-.5 4L5 7H3Z" fill="#eee" /><path d="M7.500 2.500h8v12h-8ZM9.500.5h4v2h-4Z" stroke="#eee" fill="none" strokeWidth="1.100" /><path d="M9 4h5v9H9Z" fill="#eee" /></Icon>
          <Fit w={39} ml={5} color="#eee">100 %</Fit>
        </Row>
      </TopBar>

      <TitleBar>
        <span />
        <Row><Fit w={805} bold size={14.2} color="#b0b0b0">{'Internet Archive: Digital Library of Free & Borrowable Books, Movies, Music & Wayback Machine — Mozilla Firefox'}</Fit></Row>
        <Row>
          <Icon width="8" height="9" viewBox="0 0 8 9" $mt={4} stroke="#aaa"><path d="M0 6.500h8" /></Icon>
          <Icon width="8" height="9" viewBox="0 0 8 9" $ml={26} $mt={-1} fill="none" stroke="#aaa"><path d="M.5 2.500h5v6h-5ZM3 .5h4.500V7" /></Icon>
          <Icon width="9" height="9" viewBox="0 0 9 9" $ml={26} $mt={-1} stroke="#aaa" strokeWidth="1.200"><path d="m.5.5 8 8M8.500.5l-8 8" /></Icon>
        </Row>
      </TitleBar>

      <Chrome>
        <ThemeArt />
        <MenuRow>
          {menus.map(([a, u, b, w, ml]) => (
            <Fit key={u + b} chars={(a + u + b).length} w={w} ml={ml} color="#cfcfcf">{a}<u>{u}</u>{b}</Fit>
          ))}
        </MenuRow>
        <TabRow>
          <Scroller $side="left"><Icon width="7" height="13" viewBox="0 0 7 13" fill="none" stroke="#a4bcc6" strokeWidth="1.300"><path d="M6 1 1 6.500 6 12" /></Icon></Scroller>
          <Tabs>
            {tabKinds.map((k, i) =>
              k === '*' ? <ActiveTab key={i}><LoadingDot /></ActiveTab> : (
                <Tab key={i}>
                  {k === 'g' && <SiGithub size={16} />}
                  {k === 'a' && <ArchiveFavicon />}
                  {k === '?' && <Special />}
                  {k === 'w' && <Wiki><FaWikipediaW size={13} /></Wiki>}
                </Tab>
              )
            )}
          </Tabs>
          <Scroller $side="right"><Icon width="7" height="13" viewBox="0 0 7 13" fill="none" stroke={chromeGray} strokeWidth="1.300"><path d="m1 1 5 5.500L1 12" /></Icon></Scroller>
          <Row>
            <Icon width="12" height="12" viewBox="0 0 12 12" $ml={10} stroke={chromeGray} strokeWidth="1.300"><path d="M0 6.500h12M6 .5v12" /></Icon>
            <Icon width="13" height="8" viewBox="0 0 13 8" $ml={28} fill="none" stroke={chromeGray} strokeWidth="1.300"><path d="m1 1 5.500 5.500L12 1" /></Icon>
          </Row>
        </TabRow>
        <Overlay>
          <NavRow>
            <Icon width="14" height="12" viewBox="0 0 14 12" $ml={17} fill="none" stroke="#c4c4c4" strokeWidth="1.400"><path d="M14 6H1M6 1 1 6l5 5" /></Icon>
            <Icon width="14" height="12" viewBox="0 0 14 12" $ml={22} fill="none" stroke="#c4c4c4" strokeWidth="1.400"><path d="M0 6h13M8 1l5 5-5 5" /></Icon>
            <Icon width="12" height="12" viewBox="0 0 12 12" $ml={23} fill="none" stroke="#d2d2d2" strokeWidth="1.400"><path d="m0 0 12 12M12 0 0 12" /></Icon>
            <UrlBar>
              <Icon width="15" height="16" viewBox="0 0 15 16" fill="none" stroke="#1c1c1c" strokeWidth="1.300"><path d="M7.500.8c2 1.200 3.800 1.600 6 1.900.8 5-.8 9.500-6 12.500C2.300 12.200.7 7.700 1.500 2.700 3.700 2.400 5.500 2 7.500.8Z" /></Icon>
              <Icon width="12" height="16" viewBox="0 0 12 16" $ml={14} fill="none" stroke="#1c1c1c" strokeWidth="1.300"><rect x=".7" y="7" width="10.600" height="8.200" rx="1.500" /><path d="M3 7V4c0-4 6-4 6 0v3" /></Icon>
              <Fit w={53} ml={12} color="#737375">https://</Fit>
              <Fit w={77} color="#0c0c0d">archive.org</Fit>
              <Fit w={163} color="#737375">/details/@seanpm2001</Fit>
              <Zoom><Fit w={31} size={12.8} color="#15141a">110%</Fit></Zoom>
              <Icon width="16" height="16" viewBox="0 0 24 24" fill="#0561e2" stroke="#0561e2" strokeWidth="1.500" strokeLinejoin="round"><path d="m12 1 3.300 7.400 8 .8-6 5.400 1.700 7.900L12 18.400 5 22.500l1.700-7.900-6-5.400 8-.8Z" /></Icon>
            </UrlBar>
            <Icon width="15" height="14" viewBox="0 0 15 14" $ml={16} fill="none" stroke="#c0c8cc" strokeWidth="1.400"><path d="M1 1h13v5.500a6.500 6.500 0 0 1-13 0Z" /><path d="m4.500 5 3 3 3-3" /></Icon>
            <Icon width="14" height="15" viewBox="0 0 14 15" $ml={20} fill="none" stroke="#00ddff" strokeWidth="1.400"><path d="M7 0v9.500M3 6l4 4 4-4M.7 11v2a1.300 1.300 0 0 0 1.300 1.300h10a1.300 1.300 0 0 0 1.300-1.300v-2" /></Icon>
            <Icon width="15" height="15" viewBox="0 0 15 15" $ml={23}><circle cx="7.500" cy="7.500" r="6.800" fill="none" stroke={chromeGray} strokeWidth="1.300" /><circle cx="7.500" cy="5.200" r="2.200" fill={chromeGray} /><path d="M3.500 8.500h8a4 3.500 0 0 1-8 0Z" fill={chromeGray} /></Icon>
            <Icon width="14" height="16" viewBox="0 0 14 16" $ml={21}><path d="M7 0c2 1.300 4.500 1.700 7 1.700V8c0 4-3 6.500-7 8-4-1.500-7-4-7-8V1.700C2.500 1.700 5 1.300 7 0Z" fill="#6e6e6e" /><path d="M3 5.500V8c0 2 3 2 3 0V5.500M8 5.500v4c4 0 4-4 0-4Z" fill="none" stroke="#eee" strokeWidth="1.100" /></Icon>
            <BadgeHost>
              <Icon width="16" height="16" viewBox="0 0 16 16" fill="none" stroke="#b8bcbc" strokeWidth="2"><path d="M2 14V2h6" /><path d="m8 6 6 7M15 9v5h-5" /></Icon>
              <Badge><Fit w={12} size={10}>on</Fit></Badge>
            </BadgeHost>
            <Icon width="14" height="16" viewBox="0 0 14 16" $ml={20} fill="none" stroke={chromeGray} strokeWidth="1.300"><path d="M1 15.300V11c4 1 4-4.500 0-3.500V5h4c-1-5 4.500-5 3.500 0H13v10.300Z" /></Icon>
            <Icon width="12" height="12" viewBox="0 0 12 12" $ml={23} stroke={chromeGray} strokeWidth="1.200"><path d="M0 1.500h12M0 6h12M0 10.500h12" /></Icon>
          </NavRow>
          <Bookmarks>
            {bookmarks.map(([t, w, tw]) => (
              <Bookmark key={t} $w={w}><Folder /><Fit w={tw} color="#d2d2d2" shadow>{t}</Fit></Bookmark>
            ))}
            <Bookmark $w={83}><Icon width="14" height="12" viewBox="0 0 14 12" $ml={62} fill="none" stroke={chromeGray} strokeWidth="1.200"><path d="m1 0 6 6-6 6M7 0l6 6-6 6" /></Icon></Bookmark>
          </Bookmarks>
        </Overlay>
      </Chrome>

      <SiteNav>
        <Temple w={29} h={33} color="#fff" />
        <Wordmark>
          <WordLine><Fit w={107} size={18.600} font={SERIF}>INTERNET</Fit></WordLine>
          <WordLine><Fit w={84} size={18.600} font={SERIF}>ARCHIVE</Fit></WordLine>
        </Wordmark>
        <Spacer $w={10} />
        {mediaNav.map(([t, w, tl, tw, icon]) => (
          <NavSlot key={t} $w={w} $tl={tl}>{icon}<Lift><Fit w={tw} size={15} color={GRAY} font={SANS}>{t}</Fit></Lift></NavSlot>
        ))}
        <Icon width="29" height="33" viewBox="0 0 29 33" fill={GRAY}><ellipse cx="14.500" cy="7" rx="7.500" ry="7" /><path d="M0 33c0-9 4-16 9-16 3 1.500 8 1.500 11 0 5 0 9 7 9 16Z" /></Icon>
        <Lift><Fit w={127} ml={12} size={15.4} color={GRAY} font={SANS}>SIGN UP | LOG IN</Fit></Lift>
        <Icon width="21" height="21" viewBox="0 0 21 21" $ml={18} $mt={1} fill={GRAY}><path d="M0 0h21v2.600H0ZM10.500 4.500l7 8.500h-4.300v8H7.800v-8H3.500Z" /></Icon>
        <Fit w={61} ml={11} size={15.4} color={GRAY} font={SANS}>UPLOAD</Fit>
        <Spacer $w={19} />
        <SiteSearch><Magnifier size={20} /><Fit w={47} ml={3} color="#8c8c8c">Search</Fit></SiteSearch>
      </SiteNav>

      <SubNav>
        {subNav.map(([t, w, ml]) => (
          <React.Fragment key={t}>
            <Fit w={w} ml={ml} size={13.4} color="#aaa" font={SANS}>{t}</Fit>
            {t === 'DONATE' && <Icon width="11" height="10" viewBox="0 0 22 20" $ml={7} $mt={1} fill="#f00"><path d="M11 20C3 13 0 10 0 5.500 0 0 8-2 11 4c3-6 11-4 11 1.500C22 10 19 13 11 20Z" /></Icon>}
          </React.Fragment>
        ))}
      </SubNav>

      <Hero>
        <HeroTop>
          <Placeholder $w={98} $h={109} />
          <Stack $gap={11}><Placeholder $w={436} $h={49} /><Placeholder $w={327} $h={22} /></Stack>
          <Favorite>
            <Icon width="18" height="17" viewBox="0 0 24 23" $mt={3} fill="none" stroke="#fff" strokeWidth="2"><path d="m12 2.500 2.500 6.300h6.800l-5.300 4.400 2 7L12 16.200 6 20.200l2-7-5.300-4.400h6.800Z" /></Icon>
            <Fit w={54} size={15.2} font={SANS}>Favorite</Fit>
          </Favorite>
        </HeroTop>
        <HeroTabs>
          {heroTabs.map(([t, w, tw], i) => (
            <HeroTab key={t} $w={w} $active={i === 0}><Fit w={tw} size={14.8} color={i === 0 ? '#fff' : '#a3b6cc'} font={SANS}>{t}</Fit></HeroTab>
          ))}
        </HeroTabs>
      </Hero>

      <Body>
        <Sidebar>
          <Slot $h={89}><Fit w={144} size={26} color={ink} font={SANS}>Searching…</Fit></Slot>
          <Slot $h={42}><Fit w={109} bold size={15.4} color="#919193" font={SANS}>Year Published</Fit></Slot>
          <Slot $h={44} $pl={90}><Fit w={16} size={15.4} color="#9a9a9c" font={SANS}>…</Fit></Slot>
          {[['Media Type', 82], ['Availability', 80], ['Year', 32]].map(([t, w]) => (
            <Facet key={t}>
              <FacetHead><Fit w={w as number} bold size={15.4} color="#919193" font={SANS}>{t}</Fit></FacetHead>
              {[0, 1, 2, 3, 4].map((i) => <FacetRow key={i}><Check /><Bar $w={125} /><Bar $w={39} /></FacetRow>)}
            </Facet>
          ))}
        </Sidebar>
        <Panel>
          <SortBar>
            <Icon width="15" height="24" viewBox="0 0 15 24"><path d="M5 0 9 7.500H6.500V13h-3V7.500H1Z" fill="#b9b9b9" /><path d="M10 24 5.500 16H8v-5.500h3.500V16H14.500Z" fill={ink} /></Icon>
            <Fit w={58} ml={6} bold size={15.2} color={ink} font={SANS}>Sort by:</Fit>
            <Fit w={92} ml={19} size={15.2} color={ink} font={SANS}>Weekly views</Fit>
            <Chevron />
            <Fit w={29} ml={25} size={15.2} color={ink} font={SANS}>Title</Fit>
            <Fit w={99} ml={23} bold size={15.2} color={ink} font={SANS}>Date archived</Fit>
            <Chevron />
            <Fit w={51} ml={23} size={15.2} color={ink} font={SANS}>Creator</Fit>
            <UploadSearch><Magnifier size={23} color={ink} /><Fit w={120} ml={1} size={16.5} color="#a6a6a6">Search uploads</Fit></UploadSearch>
            <Icon width="26" height="27" viewBox="0 0 26 27" $ml={10} $mt={-3} fill={ink}><path d="M0 0h7.500v12H0ZM9.200 0h7.500v12H9.200ZM18.500 0H26v12h-7.500ZM0 14.500h7.500v12H0ZM9.200 14.500h7.500v12H9.200ZM18.500 14.500H26v12h-7.500Z" /></Icon>
            <Icon width="26" height="27" viewBox="0 0 26 27" $ml={9} $mt={-3}><path d="M0 0h7v7H0ZM0 14h7v7H0Z" fill="#b9b9b9" /><path d="M8 .8h18M8 4.300h18M8 7.800h18M8 11.300h18M8 14.800h18M8 18.300h18M8 21.800h18M8 25.800h18" stroke="#bdbdbd" strokeWidth="1.500" /></Icon>
            <Icon width="26" height="27" viewBox="0 0 26 27" $ml={9} $mt={-3}><path d="M0 .8h26M0 5h26M0 9h26M0 13h26M0 17h26M0 21.300h26M0 25.800h26" stroke="#bdbdbd" strokeWidth="1.700" /></Icon>
          </SortBar>
          <Tiles>{Array.from({ length: 18 }, (_, i) => <Tile key={i} />)}</Tiles>
        </Panel>
      </Body>

      <Dock>
        <Artwork width="1920" height="37">
          <defs>
            <linearGradient id="ground">
              <stop offset="0" stopColor="#20251e" /><stop offset=".15" stopColor="#262c23" /><stop offset=".35" stopColor="#33352f" /><stop offset=".45" stopColor="#2b3127" />
              <stop offset=".7" stopColor="#2f322c" /><stop offset=".75" stopColor="#383838" /><stop offset="1" stopColor="#333" />
            </linearGradient>
            <linearGradient id="fade"><stop offset="0" stopColor="#fff" /><stop offset=".7" stopColor="#fff" /><stop offset=".75" stopColor="#fff" stopOpacity=".06" /></linearGradient>
            <mask id="m"><rect width="1920" height="37" fill="url(#fade)" /></mask>
            <filter id="grass" x="0" y="0" width="100%" height="100%">
              <feTurbulence type="fractalNoise" baseFrequency="0.13 0.08" numOctaves="3" seed="9" />
              <feColorMatrix values="0 0 0 0 .3  0 0 0 0 .34  0 0 0 0 .27  1.2 0 0 0 -.4" />
            </filter>
          </defs>
          <rect width="1920" height="37" fill="url(#ground)" />
          <g mask="url(#m)"><g transform="skewX(-15)"><rect width="1960" height="37" filter="url(#grass)" opacity=".22" /></g></g>
        </Artwork>
        {dock.map((d, i) => (
          <DockItem key={i}><DockTile $on={d.on}>{d.art}</DockTile><Dotted n={d.dots} /></DockItem>
        ))}
        <DockRule />
        {lastDock.map((d, i) => (
          <DockItem key={i}><DockTile>{d.art}</DockTile><Dotted n={d.dots} /></DockItem>
        ))}
        <Row $pl={500}>
          <Icon width="11" height="11" viewBox="0 0 11 11" fill="#ddd"><path d="M0 0h2.500v2.500H0ZM4.200 0h2.500v2.500H4.200ZM8.500 0H11v2.500H8.500ZM0 4.200h2.500v2.500H0ZM4.200 4.200h2.500v2.500H4.200ZM8.500 4.200H11v2.500H8.500ZM0 8.500h2.500V11H0ZM4.200 8.500h2.500V11H4.200ZM8.500 8.500H11V11H8.500Z" /></Icon>
        </Row>
      </Dock>

      <ScrollThumb />
      <Status><Fit w={167} color="#e6e6e6">Waiting for archive.org…</Fit></Status>
    </Desktop>
  );
}
